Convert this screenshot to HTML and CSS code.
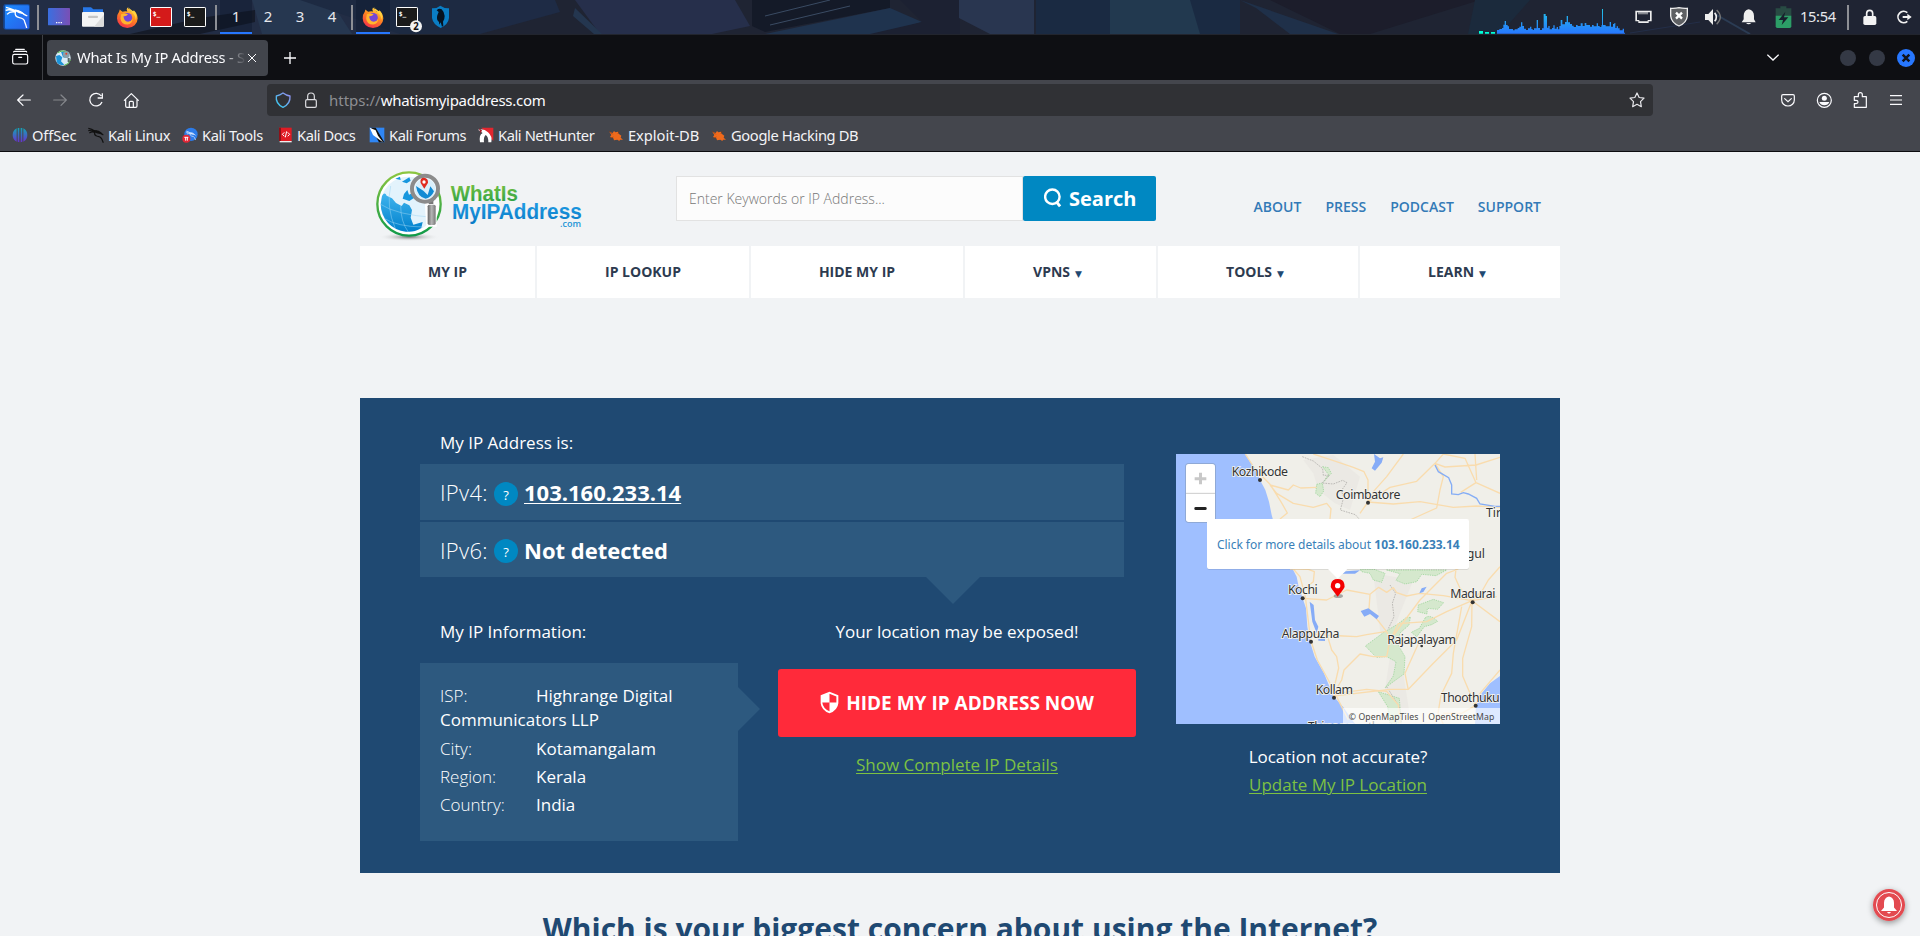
FILE: index.html
```html
<!DOCTYPE html>
<html lang="en">
<head>
<meta charset="utf-8">
<title>What Is My IP Address</title>
<link rel="stylesheet" href="styles.css">
</head>
<body>
<svg class="defs" width="0" height="0">
  <defs>
    <linearGradient id="kali" x1="0" y1="0" x2="1" y2="1"><stop offset="0" stop-color="#1a8cff"/><stop offset="1" stop-color="#2a5fe8"/></linearGradient>
    <linearGradient id="desk" x1="0" y1="0" x2="1" y2="0"><stop offset="0" stop-color="#3a6fe0"/><stop offset="1" stop-color="#7a4fb5"/></linearGradient>
    <linearGradient id="ffx" x1="0.8" y1="0" x2="0.3" y2="1"><stop offset="0" stop-color="#ffe14a"/><stop offset=".45" stop-color="#ff8a1f"/><stop offset="1" stop-color="#f5304a"/></linearGradient>
    <linearGradient id="shl" x1="0" y1="1" x2="1" y2="0"><stop offset="0" stop-color="#2fd0ee"/><stop offset="1" stop-color="#9a8cf0"/></linearGradient>
    <linearGradient id="cpu" x1="0" y1="0" x2="0" y2="1"><stop offset="0" stop-color="#22c3e6"/><stop offset="1" stop-color="#2777ff"/></linearGradient>
    <linearGradient id="off" x1="0" y1="0" x2="0" y2="1"><stop offset="0" stop-color="#12a5b5"/><stop offset="1" stop-color="#6a2fd0"/></linearGradient>
    <linearGradient id="ring" x1="0" y1="0" x2="0" y2="1"><stop offset="0" stop-color="#8cc640"/><stop offset="1" stop-color="#0f9a48"/></linearGradient>
    <linearGradient id="sea" x1="0" y1="0" x2="0" y2="1"><stop offset="0" stop-color="#3fb4ee"/><stop offset="1" stop-color="#0080cc"/></linearGradient>
    <linearGradient id="green" x1="0" y1="0" x2="0" y2="1"><stop offset="0" stop-color="#7cc242"/><stop offset="1" stop-color="#1f9d48"/></linearGradient>
    <linearGradient id="blue" x1="0" y1="0" x2="0" y2="1"><stop offset="0" stop-color="#22a0e8"/><stop offset="1" stop-color="#0a7bc6"/></linearGradient>
    <linearGradient id="steel" x1="0" y1="0" x2="1" y2="0"><stop offset="0" stop-color="#666"/><stop offset=".5" stop-color="#b5b5b5"/><stop offset="1" stop-color="#777"/></linearGradient>
    <radialGradient id="shade"><stop offset="0" stop-color="#777"/><stop offset="1" stop-color="#f1f3f5" stop-opacity="0"/></radialGradient>
    <symbol id="firefox" viewBox="0 0 64 64">
      <path fill="url(#ffx)" d="M32 4Q40 10 43 17Q50 17 51 12Q62 23 62 36A30 28 0 0 1 2 36Q1 26 8 17L10 10Q14 14 18 17Q25 14 32 16Q28 9 32 4Z"/>
      <circle cx="32" cy="34" r="14" fill="#7546d6"/>
      <path fill="#ffb52e" d="M14 24Q24 19 34 24Q29 31 21 30Q21 44 34 46Q44 45 47 37Q47 52 32 54Q14 53 12 36Z"/>
      <path fill="#ffd23f" d="M35 2Q36 12 45 18Q57 27 56 41Q62 30 54 17Q47 15 43 11Q37 8 35 2Z"/>
    </symbol>
    <symbol id="dragon" viewBox="0 0 48 48">
      <path fill="none" stroke="currentColor" stroke-width="3.6" d="M1 4Q12 6 20 12Q30 10 38 17Q42 22 46 24M1 11Q12 9 22 16M4 18Q12 13 20 16Q18 24 26 27Q38 29 41 35Q44 42 46 47"/>
      <path fill="currentColor" d="M16 9Q34 10 45 24L36 21Q28 20 22 17Z"/>
    </symbol>
    <symbol id="bug" viewBox="0 0 48 48">
      <path fill="#f06a1c" d="M4 14L14 18L18 12L22 16L30 14L32 20L40 26L38 32L45 38L36 38L34 42L28 38L18 40L16 34L6 30L10 24Z"/><path stroke="#8a3a10" stroke-width="2" d="M4 12L14 22M8 34L16 30M34 12L30 20"/>
    </symbol>
  </defs>
</svg>

<div class="panel">
  <svg class="wallpaper" viewBox="0 0 1920 34" preserveAspectRatio="none">
    <path fill="#222d45" d="M0 0H480V34H0Z"/><path fill="#151b29" d="M130 34L200 18L255 10V22L200 34Z"/><path fill="#263750" d="M252 0H330L352 34H262Z"/><path fill="#1d2a42" d="M300 0H480V34H400Z"/>
    <path fill="#1e2b45" d="M480 0H555L560 12L480 34Z"/><path fill="#262f4b" d="M575 0H735L750 26L712 34H600Z"/><path fill="#24364f" d="M575 8L602 34H594L573 16Z"/><path fill="#141a28" d="M752 0H890V8L765 32L752 26Z"/><path stroke="#3a4b63" d="M765 16L830 0M770 25L850 6"/>
    <path fill="#1f334e" d="M890 8L765 34H880L922 22Z"/><path fill="#1c2132" d="M900 0H960V34H870L922 22Z"/><path fill="#293650" d="M959 0H1034V34H990L959 18Z"/><path fill="#1a2a42" d="M1036 0H1240V34H1036Z"/><path fill="#22394f" d="M1110 0H1190L1200 34H1110Z"/><path fill="#1f3049" d="M1240 0L1338 34H1290L1256 8Z"/><path fill="#1c1d2b" d="M1270 0H1480L1370 34H1340Z"/>
    <path fill="#1b2a3c" d="M1475 0L1530 0L1500 34H1468Z"/><path stroke="#2b3c54" stroke-width="2" d="M1715 14L1750 34"/><path stroke="#232e48" d="M1630 33L1700 22"/>
  </svg>
  <div class="cell start"><svg viewBox="0 0 108 102" width="36" height="34"><rect x="10" y="12" width="80" height="77" rx="7" fill="#164a9b"/><rect x="15" y="16" width="72" height="70" rx="3" fill="url(#kali)"/><path fill="none" stroke="#fff" stroke-width="4" d="M18 22Q30 24 46 32Q60 31 72 43L82 48M17 31Q30 26 48 35M21 43Q30 33 46 36Q43 50 58 53Q73 56 74 65Q79 78 80 84"/><path fill="#fff" d="M44 28Q64 31 80 48L68 42Q56 40 50 36Z"/></svg></div>
  <div class="sep first"></div>
  <div class="cell"><svg viewBox="126 0 102 102"><rect x="144" y="24" width="66" height="52" rx="2" fill="url(#desk)"/><path fill="#fff" d="M168 66h4v4h-4zm7 0h4v4h-4zm7 0h4v4h-4z"/></svg></div>
  <div class="cell"><svg viewBox="228 0 102 102"><path fill="#2777e8" d="M249 22h24l7 6h29v22h-60z"/><rect x="246" y="36" width="66" height="44" rx="3" fill="#f4f4f4"/><path fill="#dcdcdc" d="M312 44V77L308 80H282Z"/><rect x="264" y="47" width="30" height="7" rx="3" fill="#c5c5c5"/></svg></div>
  <div class="cell"><svg viewBox="0 0 102 102"><use href="#firefox" x="19" y="18" width="66" height="66"/></svg></div>
  <div class="cell"><svg viewBox="432 0 102 102"><rect x="451.500" y="22.500" width="63" height="57" rx="2" fill="#d41a1a" stroke="#fff" stroke-width="3"/><text x="458" y="48" class="prompt">$_</text></svg></div>
  <div class="cell"><svg viewBox="534 0 102 102"><rect x="553.500" y="22.500" width="63" height="57" rx="2" fill="#1a1a1a" stroke="#fff" stroke-width="3"/><text x="560" y="48" class="prompt">$_</text></svg></div>
  <div class="sep"></div>
  <div class="ws on">1</div><div class="ws">2</div><div class="ws">3</div><div class="ws">4</div>
  <div class="sep"></div>
  <div class="cell on"><svg viewBox="0 0 102 102"><use href="#firefox" x="18" y="18" width="66" height="66"/></svg></div>
  <div class="cell"><svg viewBox="1170 0 102 102"><rect x="1189.500" y="22.500" width="63" height="57" rx="2" fill="#1a1a1a" stroke="#fff" stroke-width="3"/><text x="1196" y="48" class="prompt">$_</text><circle cx="1248" cy="79" r="18" fill="#f2f2f2"/><text x="1248" y="90" class="count">2</text></svg></div>
  <div class="cell"><svg viewBox="1272 0 102 102"><path fill="#0a7dc4" d="M1321 17Q1334 26 1347 25V54Q1345 73 1322 84Q1299 73 1296 54V25Q1310 26 1321 17Z"/><path fill="#06121f" d="M1310 31Q1317 24 1325 28Q1333 36 1334 48Q1334 58 1329 65L1330 77L1326 80L1322 67L1318 74L1317 66Q1308 60 1312 46L1316 36Z"/></svg></div>
  <div class="tray">
    <svg viewBox="114 0 444 102" width="148" height="34"><path fill="#00ffd5" d="M117 93h12v8h-12zM135 96h12v5h-12zM153 96h12v5h-12z"/><path fill="url(#cpu)" d="M171 101V90H178V87H186V84H190V74H194V63H198V75H203V79H207V87H219V91H224V88H233V84H238V80H243V67H247V78H252V86H258V90H264V85H270V80H274V87H278V90H282V85H290V60H294V84H300V90H306V85H311V42H317V48H321V83H325V78H329V88H336V84H340V76H344V86H350V81H354V88H358V78H362V60H367V73H375V66H380V48H384V67H390V72H396V77H401V81H408V75H413V78H422V70H428V78H434V69H439V75H450V80H456V75H461V79H470V70H474V78H479V81H484V76H486V27H489V75H497V79H509V66H513V80H519V72H523V69H526V84H530V79H534V85H539V91H548V86H552V98H555V101Z"/></svg>
    <svg class="ti" viewBox="558 0 105 102"><path fill="#eee" fill-rule="evenodd" d="M586 32H635V64H626V69H595V64H586ZM591 37V60H598V64H623V60H630V37Z"/><path stroke="#eee" stroke-width="3" d="M597 36V43M603 36V43M609 36V43M615 36V43M621 36V43"/></svg>
    <svg class="ti" viewBox="663 0 105 102"><path fill="#5e6063" stroke="#eee" stroke-width="4" d="M692 25Q706 26 717 23Q729 26 742 25V48Q740 68 717 78Q694 68 692 48Z"/><path stroke="#fff" stroke-width="7" d="M708 38L726 56M726 38L708 56"/></svg>
    <svg class="ti" viewBox="768 0 105 102"><path fill="#eee" d="M795 42h10l14-15v48L805 60H795z"/><path fill="none" stroke="#eee" stroke-width="5" d="M824 38Q834 51 824 64"/><path fill="none" stroke="#777" stroke-width="4" d="M830 30Q852 51 830 73"/></svg>
    <svg class="ti" viewBox="871 0 105 102"><path fill="#eee" d="M924 28Q940 31 940 48V58L945 67H903L909 58V48Q909 31 924 28ZM916 69h16q-8 8-16 0z"/></svg>
    <svg class="ti" viewBox="974 0 105 102"><path fill="#284b43" d="M1017 19h18v6h15v24h-47V25h14z"/><path fill="#2c9e67" d="M1003 47h47v32q0 5-5 5h-37q-5 0-5-5z"/><path fill="#17202d" d="M1032 35L1012 60h13l-4 15L1041 52h-13z"/></svg>
    <span class="clock">15:54</span><span class="bar"></span>
    <svg class="ti" viewBox="1234 0 105 102"><path fill="none" stroke="#f3f3f3" stroke-width="5" d="M1278 50V40Q1278 31 1287 31Q1296 31 1296 40V50"/><rect x="1268" y="48" width="39" height="27" rx="5" fill="#f3f3f3"/></svg>
    <svg class="ti" viewBox="1339 0 105 102"><path fill="none" stroke="#f3f3f3" stroke-width="5" d="M1400 38A17 17 0 1 0 1400 64"/><path fill="#f3f3f3" d="M1386 48h14v-7l13 10-13 10v-7h-14z"/></svg>
  </div>
</div>

<div class="tabs">
  <div class="view"><svg viewBox="33 145 54 54" width="18" height="18"><g fill="none" stroke="#fbfbfe" stroke-width="3.500" stroke-linecap="round"><rect x="38" y="164" width="45" height="29" rx="5"/><path d="M41 157Q41 155 44 155H77Q80 155 80 157M47 149H73M56 173H65"/></g></svg></div>
  <div class="tab"><svg viewBox="0 0 48 48" width="16" height="16"><circle cx="24" cy="24" r="23" fill="#d9ecf7"/><path fill="#1c93d8" d="M3 18L13 15L22 22L18 34L28 44Q12 48 5 36ZM18 5L30 3L28 14L36 24L24 22Z"/><path fill="none" stroke="#57b947" stroke-width="3" d="M8 8Q20-1 36 5M46 30Q42 43 28 46"/><circle cx="34" cy="14" r="10" fill="#8aa0ac"/><circle cx="34" cy="11" r="3" fill="#e5432a"/><path fill="#566" d="M38 24h6v12h-6z"/></svg><span class="tabtext">What Is My IP Address - See</span><svg class="close" viewBox="0 0 30 30" width="10" height="10"><path stroke="#fbfbfe" stroke-width="3" d="M3 3L27 27M27 3L3 27"/></svg></div>
  <svg class="plus" viewBox="0 0 36 36" width="12" height="12"><path stroke="#fbfbfe" stroke-width="4" d="M18 0V36M0 18H36"/></svg>
  <svg class="chev" viewBox="0 0 36 21" width="12" height="7"><path fill="none" stroke="#fbfbfe" stroke-width="4" d="M1 2L18 18L35 2"/></svg>
  <span class="win"></span><span class="win"></span><span class="win x"><svg viewBox="0 0 18 18" width="10" height="10"><path stroke="#10131a" stroke-width="4.500" d="M3 3L15 15M15 3L3 15"/></svg></span>
</div>

<div class="toolbar">
  <svg class="tb" viewBox="18 246 108 108"><path fill="none" stroke="#fbfbfe" stroke-width="3.600" stroke-linecap="round" stroke-linejoin="round" d="M91 300H53M69 285L53 300L69 316"/></svg>
  <svg class="tb" viewBox="126 246 108 108"><path fill="none" stroke="#85878c" stroke-width="3.600" stroke-linecap="round" stroke-linejoin="round" d="M161 300H199M183 285L199 300L183 316"/></svg>
  <svg class="tb" viewBox="234 246 108 108"><path fill="none" stroke="#fbfbfe" stroke-width="3.800" d="M304 288A19 19 0 1 0 306 306M307 280V294H293"/></svg>
  <svg class="tb" viewBox="342 246 108 108"><path fill="none" stroke="#fbfbfe" stroke-width="3.600" stroke-linejoin="round" stroke-linecap="round" d="M373 301L394 281L415 301M377 298V318Q377 322 381 322H407Q411 322 411 318V298M388 321V307Q388 304 391 304H397Q400 304 400 307V321"/></svg>
  <div class="urlbar">
    <svg viewBox="822 270 54 60" width="18" height="20"><path fill="none" stroke="url(#shl)" stroke-width="4" stroke-linejoin="round" d="M849 279Q858 286 870 288Q872 311 849 322Q826 311 829 288Q840 286 849 279Z"/></svg>
    <svg class="lock" viewBox="906 270 54 60" width="18" height="20"><g fill="none" stroke="#dcdce0" stroke-width="3.600"><rect x="917" y="299" width="32" height="23" rx="4"/><path d="M923 299V289Q923 279 933 279Q943 279 943 289V299"/></g></svg>
    <span class="url"><i>https://</i>whatismyipaddress.com</span>
    <svg class="star" viewBox="564 274 54 54" width="18" height="18"><path fill="none" stroke="#e8e8ec" stroke-width="3.600" stroke-linejoin="round" d="M591 280L597.500 293.500L612 295.500L601.500 306L604 321L591 314L578 321L580.500 306L570 295.500L584.500 293.500Z"/></svg>
  </div>
  <div class="tbr">
  <svg class="tb" viewBox="990 246 108 108"><path fill="none" stroke="#fbfbfe" stroke-width="3.600" stroke-linecap="round" d="M1029 284H1059Q1063 284 1063 288V300A19 18 0 0 1 1025 300V288Q1025 284 1029 284ZM1034 296L1044 305L1054 296"/></svg>
  <svg class="tb" viewBox="1098 246 108 108"><circle cx="1153" cy="301" r="21" fill="none" stroke="#fbfbfe" stroke-width="3.600"/><circle cx="1153" cy="295" r="7.500" fill="#fbfbfe"/><path fill="#fbfbfe" d="M1138 306H1168Q1164 316 1153 316Q1142 316 1138 306Z"/></svg>
  <svg class="tb" viewBox="1206 246 108 108"><path fill="none" stroke="#fbfbfe" stroke-width="3.600" stroke-linejoin="round" d="M1243 290H1255V284Q1255 278 1261 278Q1267 278 1267 284V290H1279V322H1243V311H1248Q1254 310 1254 306Q1254 301 1248 301H1243Z"/></svg>
  <svg class="tb" viewBox="1314 246 108 108"><path stroke="#fbfbfe" stroke-width="3.300" d="M1350 287H1386M1350 300H1386M1350 313H1386"/></svg>
  </div>
</div>
<div class="marks">
  <span class="m1"><svg viewBox="0 0 48 48"><path fill="url(#off)" d="M14 4V44Q2 38 2 24Q2 10 14 4ZM17 3H22V46L17 44ZM26 3H31V44L26 46ZM34 4Q46 10 46 24Q46 38 34 44Z"/></svg>OffSec</span>
  <span class="m2"><svg viewBox="0 0 48 48" color="#111"><use href="#dragon"/></svg>Kali Linux</span>
  <span class="m3"><svg viewBox="0 0 48 48"><circle cx="27" cy="22" r="20" fill="#2c7be8"/><g color="#d8e8ff"><use href="#dragon" x="12" y="10" width="30" height="30"/></g><circle cx="13" cy="35" r="12" fill="#e32636"/><path stroke="#fff" stroke-width="3" d="M7 31H19M11 31V41M16 31V41"/></svg>Kali Tools</span>
  <span class="m4"><svg viewBox="0 0 48 48"><rect x="6" y="2" width="38" height="40" fill="#e01b24"/><path fill="#8e1118" d="M6 2h6v40H6z"/><path fill="#eee" d="M8 42h36v4H8z"/><path fill="none" stroke="#fff" stroke-width="3" d="M22 16L16 22L22 28M32 16L38 22L32 28M29 13L25 31"/></svg>Kali Docs</span>
  <span class="m5"><svg viewBox="0 0 48 48"><path fill="#2f86f5" d="M2 2H46V46H2Z"/><path fill="#111" d="M6 2H20L46 46H30Z"/><path fill="#fff" d="M2 2L20 10L27 26L42 46L27 35L12 24Z"/></svg>Kali Forums</span>
  <span class="m6"><svg viewBox="0 0 48 48"><path fill="#e3262f" d="M10 2H46V42Z"/><path fill="#fff" d="M0 8Q18 4 30 16Q44 28 40 46H31Q31 28 23 24Q16 30 18 46H6Q2 24 14 18Z"/><path fill="#a01a24" d="M3 4L12 10L8 20Z"/></svg>Kali NetHunter</span>
  <span class="m7"><svg viewBox="0 0 48 48"><use href="#bug"/></svg>Exploit-DB</span>
  <span class="m8"><svg viewBox="0 0 48 48"><use href="#bug"/></svg>Google Hacking DB</span>
</div>

<div class="page">
  <header class="head">
    <svg class="logo" viewBox="45 51 630 225" width="210" height="75">
      <ellipse cx="147" cy="261" rx="92" ry="13" fill="url(#shade)"/>
      <circle cx="147" cy="162" r="95" fill="#fff" stroke="url(#ring)" stroke-width="7"/>
      <circle cx="145" cy="163" r="83" fill="#e3f3fc"/>
      <path fill="url(#sea)" d="M66 138Q74 124 80 137L96 145L108 159L125 168L132 158L148 166L156 180L152 203L160 224L188 216L184 234Q160 248 138 245A83 83 0 0 1 62 163Z"/>
      <path fill="#1797de" d="M126 95L148 82L152 92L140 100ZM106 86L120 80L122 90ZM132 132L142 120L147 134L156 130L162 144L148 153L128 146Z"/>
      <path fill="none" stroke="#9bd4f3" stroke-width="1.500" d="M62 163Q110 195 220 202M72 205Q112 230 188 231M92 108Q78 170 106 236M122 166Q122 215 145 246"/>
      <path fill="#fff" d="M194 151H230V230H199Z"/><rect x="203" y="164" width="24" height="61" rx="5" fill="url(#steel)"/><path fill="#777" d="M206 150h14v12h-14z"/>
      <circle cx="195" cy="116" r="39" fill="#eef8fd" stroke="#8b8b8b" stroke-width="12"/><circle cx="195" cy="117" r="31" fill="#d9effb"/><path fill="#118bd4" d="M168 108L190 122L203 135L211 109L222 124Q214 143 197 146Q173 142 168 108Z"/>
      <path fill="#e02b20" d="M193 116L182 99Q179 83 192 83Q205 84 204 98Z"/><circle cx="192" cy="96" r="5" fill="#fff"/>
      <text x="272" y="154" class="l1" textLength="202" lengthAdjust="spacingAndGlyphs">WhatIs</text>
      <text x="276" y="206" class="l2" textLength="389" lengthAdjust="spacingAndGlyphs">MyIPAddress</text>
      <text x="600" y="231" class="l3" textLength="63" lengthAdjust="spacingAndGlyphs">.com</text>
    </svg>
    <div class="search"><div class="field">Enter Keywords or IP Address...</div><div class="go"><svg viewBox="0 0 56 62" width="18" height="20"><circle cx="26" cy="27" r="22.500" fill="none" stroke="#fff" stroke-width="7.500"/><path stroke="#fff" stroke-width="9" d="M38 42L50 57"/></svg>Search</div></div>
    <div class="links"><a>ABOUT</a><a>PRESS</a><a>PODCAST</a><a>SUPPORT</a></div>
  </header>
  <nav class="nav"><a>MY IP</a><a>IP LOOKUP</a><a>HIDE MY IP</a><a>VPNS<b>▼</b></a><a>TOOLS<b>▼</b></a><a>LEARN<b>▼</b></a></nav>

  <section class="hero">
    <div class="main">
      <p class="cap">My IP Address is:</p>
      <div class="row r1"><span>IPv4:</span><em>?</em><strong class="u">103.160.233.14</strong></div>
      <div class="row r2"><span>IPv6:</span><em>?</em><strong>Not detected</strong><i class="down"></i></div>
      <div class="lower">
        <div class="info">
          <p class="cap2">My IP Information:</p>
          <div class="box">
            <p class="isp"><span>ISP:</span>Highrange Digital Communicators LLP</p>
            <p><span>City:</span>Kotamangalam</p>
            <p><span>Region:</span>Kerala</p>
            <p><span>Country:</span>India</p>
            <i class="right"></i>
          </div>
        </div>
        <div class="action">
          <p class="exposed">Your location may be exposed!</p>
          <div class="hide"><svg viewBox="244 392 58 68" width="19" height="23"><path fill="#fff" fill-rule="evenodd" d="M273 393L300 404V428Q298 449 273 459Q248 449 246 428V404ZM273 399V426H294V408ZM273 426H251Q253 444 273 453Z"/></svg>HIDE MY IP ADDRESS NOW</div>
          <a class="green">Show Complete IP Details</a>
        </div>
      </div>
    </div>
    <div class="side">
      <svg class="map" viewBox="48 42 972 810" width="324" height="270">
        <rect x="48" y="42" width="972" height="810" fill="#9fbfff"/>
        <path fill="#f0efe9" d="M255 42L270 65L290 95L300 120L316 150L327 185L335 225L345 260L398 387L410 410L416 440L428 475L438 505L442 560L450 605L464 650L492 700L520 768L550 802L585 852H945L948 797L965 760L990 730L1020 708V42Z"/>
        <g fill="#ebe9e4"><path d="M430 60L520 45L600 110L570 210L525 190L475 150L460 100Z"/><path d="M640 400L760 420L720 520L690 600L730 700L750 830L670 780L690 650L660 570Z"/></g>
        <g fill="#d5e8cd" stroke="#8ed08e" stroke-width="2" stroke-dasharray="4 3"><path d="M488 80L505 83L514 100L490 127L505 103Z"/><path d="M470 133L487 129L491 153L480 170L467 160Z"/><path d="M600 387H640L675 400L665 427L640 420L630 400L605 395Z"/><path d="M680 390H860L828 407L785 403L770 425L735 432L708 421L720 401Z"/><path d="M775 495L820 478L851 488L833 508L802 505L801 522L773 515Z"/><path d="M796 533Q811 522 833 544L815 554L793 560L770 590L754 577L778 565Z"/><path d="M751 532L747 555L720 579L712 611L735 650L732 702L700 725L675 744L700 708L708 665L680 650L649 652L616 618L670 578L714 552L738 533Z"/><path d="M655 755L680 763L718 775L724 850H690L683 800Z"/></g>
        <g fill="none" stroke="#bcbab6" stroke-width="3" stroke-dasharray="5 3"><path d="M427 50L460 63L488 86L490 106L508 106L486 129L520 132L548 121L561 128L544 152L551 172L541 210L586 224L600 240M690 435L707 460L697 490L702 530L684 568M680 740L702 775L718 800L724 850"/></g>
        <g fill="none" stroke="#f9dcae" stroke-width="4" stroke-linejoin="round">
          <path d="M256 42L285 87L330 133L364 187L382 219L360 237M400 387L420 410L436 470L452 600L472 660L505 720L540 790L565 840M330 135L385 150L400 135L422 144L470 142M330 135L350 160L400 190L460 202L500 190L513 206L510 237M390 387L420 387L445 388L463 395L460 425L440 440"/>
          <path d="M460 42L500 55L545 70L580 82L612 95L624 120V186L600 220M730 42L680 110L640 155L624 186L700 192L780 185L880 202L950 198L1020 202M624 186L690 142L770 124L825 70L850 42M825 70L850 110L840 150L830 204L750 240M1020 52L948 75L855 81L825 70M850 42L915 55L948 128L902 157M948 128L1020 160M945 42L950 120"/>
          <path d="M428 475L500 480L560 450L630 463L656 442L680 457L700 443L710 458L740 468L780 460L850 467L936 482L1010 470M630 463L627 507L680 575L690 600M690 600L780 480L860 400L895 387M936 482L900 445L885 412L888 387M1020 380L985 420L968 450L936 482M690 600L715 551L800 545L860 515L936 482M452 582L550 588L590 590L620 584L680 574M690 600L680 650L640 650L600 642L552 690L545 720L530 745L520 768L690 748L745 748L820 670L890 600L936 482M500 580L515 630L530 650L536 684L522 745M936 482L935 560L908 655L908 708L946 797M936 482L1020 545M905 500L880 640L875 700L843 765L834 820L850 852M530 760L620 748L680 754L715 795L720 852M745 750L735 700L780 600M1020 690L960 760L946 797L905 820L850 820"/>
        </g>
        <path fill="none" stroke="#85adf5" stroke-width="4" d="M825 75L835 95L866 113L875 135V162L895 164L910 158L925 162L950 175L960 192L1005 199H1020"/>
        <path fill="#86acf7" d="M642 42L660 55L670 52L665 68L645 92L635 85L645 65ZM548 401L557 394L600 391L585 401ZM602 513L625 505L657 528L650 538L630 522L613 530ZM778 460L785 445L800 440L790 456ZM449 485L461 495L465 540L475 560L470 580L457 545ZM475 596L495 595V603L475 602Z"/>
        <g fill="#333"><circle cx="300" cy="120" r="6"/><circle cx="624" cy="188" r="6"/><circle cx="428" cy="475" r="6"/><circle cx="453" cy="605" r="6"/><circle cx="522" cy="773" r="6"/><circle cx="938" cy="487" r="6"/><circle cx="947" cy="797" r="6"/><circle cx="785" cy="618" r="4"/></g>
        <g class="city"><text x="215" y="108" textLength="169">Kozhikode</text><text x="527" y="176" textLength="194">Coimbatore</text><text x="978" y="230">Tir</text><text x="920" y="353">gul</text><text x="384" y="463" textLength="89">Kochi</text><text x="871" y="474" textLength="135">Madurai</text><text x="365" y="594" textLength="173">Alappuzha</text><text x="682" y="612" textLength="206">Rajapalayam</text><text x="467" y="762" textLength="112">Kollam</text><text x="843" y="785" textLength="176">Thoothuku</text><text x="444" y="874" textLength="340">Thiruvananthapuram</text></g>
        <rect x="549" y="804" width="471" height="48" fill="#fff" fill-opacity=".65"/><text class="attr" x="566" y="840" textLength="437">© OpenMapTiles | OpenStreetMap</text>
        <rect x="75" y="69" width="93" height="180" rx="12" fill="#8fa9d6"/><rect x="78" y="72" width="87" height="174" rx="8" fill="#fff"/><path stroke="#ccc" stroke-width="3" d="M78 160H165"/><path stroke="#c8c8c8" stroke-width="9" d="M104 116H139M121.500 98V133"/><rect x="103" y="201" width="37" height="9" rx="4" fill="#222"/>
        <rect x="141" y="239" width="786" height="150" rx="6" fill="#000" opacity=".12"/><path fill="#fff" d="M147 237H921Q927 237 927 243V381Q927 387 921 387H562L533 416L504 387H147Q141 387 141 381V243Q141 237 147 237Z"/>
        <text class="pop" x="171" y="327" textLength="462">Click for more details about</text><text class="pop b" x="643" y="327" textLength="256">103.160.233.14</text>
        <ellipse cx="535" cy="468" rx="14" ry="6" fill="#777" opacity=".6"/><path fill="#f40000" d="M533 470L516 448Q510 440 513 432Q516 417 533 417Q550 417 553 432Q556 440 550 448Z"/><circle cx="533" cy="437" r="8" fill="#fff"/>
      </svg>
      <p class="acc">Location not accurate?</p><a class="green">Update My IP Location</a>
    </div>
  </section>
  <h2>Which is your biggest concern about using the Internet?</h2>
</div>
<div class="bell"><svg viewBox="0 0 32 32" width="32" height="32"><circle cx="16" cy="16" r="16" fill="#e34a50"/><circle cx="16" cy="16" r="12.500" fill="none" stroke="#fff" stroke-width="1"/><path fill="#fff" d="M16 7.500Q21 8.500 21 14V18.500L24 22H8L11 18.500V14Q11 8.500 16 7.500ZM14 23H18Q16 26 14 23Z"/></svg></div>
</body>
</html>
```
FILE: styles.css
```css
* { box-sizing: border-box; }
body { margin: 0; width: 1920px; height: 936px; overflow: hidden; background: #f1f3f5; font-family: "Open Sans", sans-serif; position: relative; }
p, h2 { margin: 0; }
svg { display: block; flex: none; }
.defs { position: absolute; }

.panel { height: 35px; display: flex; position: relative; background: #1f2433; border-bottom: 1px solid #22252e; font: 15px/34px "Noto Sans", sans-serif; color: #e6e8ec; }
.wallpaper { position: absolute; left: 0; top: 0; width: 1920px; height: 34px; }
.panel > div { position: relative; }
.cell { width: 34px; height: 34px; }
.start { width: 36px; }
.sep { width: 8px; height: 34px; padding: 5px 3px 4px; }
.sep::before { content: ""; display: block; width: 2px; height: 25px; background: #8d8f95; }
.sep.first { width: 6px; padding-left: 1px; }
.ws { width: 32px; height: 34px; text-align: center; line-height: 33px; }
.on { background: rgba(10, 20, 40, .35); box-shadow: inset 0 -2px #2777ff; }
.prompt { font: bold 19px "DejaVu Sans Mono", monospace; fill: #fff; }
.count { font: bold 29px "Noto Sans", sans-serif; fill: #111; text-anchor: middle; }
.tray { display: flex; margin-left: auto; margin-right: -2px; }
.ti { width: 35px; height: 34px; }
.clock { width: 36px; margin-left: -1px; white-space: nowrap; font-size: 14.7px; line-height: 33px; letter-spacing: -.35px; }
.bar { width: 2px; height: 25px; margin: 5px 3px 0 11px; background: #8d8f95; }

.tabs { height: 45px; background: #0e0f13; display: flex; align-items: center; font: 14.7px/20px "Noto Sans", sans-serif; color: #fbfbfe; }
.view { width: 43px; height: 45px; padding: 13px 0 0 11px; border-right: 1px solid #3e4045; }
.tab { width: 221px; height: 36px; margin: 0 16px 0 4px; padding: 0 11px 0 8px; border-radius: 4px; background: #42454c; display: flex; align-items: center; }
.tabtext { width: 169px; margin: -1px 0 0 6px; letter-spacing: -.26px; overflow: hidden; white-space: nowrap; -webkit-mask-image: linear-gradient(90deg, #000 145px, transparent 169px); mask-image: linear-gradient(90deg, #000 145px, transparent 169px); }
.close { margin-left: 2px; }
.chev { margin-left: auto; margin-right: 61px; }
.win { width: 16px; height: 16px; border-radius: 50%; background: #343945; margin-right: 13px; }
.win.x { width: 18px; height: 18px; background: #2777ff; margin: 0 5px 0 -1px; display: flex; align-items: center; justify-content: center; }

.toolbar { height: 40px; background: #44464d; padding-left: 6px; display: flex; align-items: center; }
.tb { width: 36px; height: 36px; }
.urlbar { width: 1386px; height: 32px; margin-left: 117px; border-radius: 4px; background: #303135; display: flex; align-items: center; padding: 0 7px; font: 15px/32px "Noto Sans", sans-serif; color: #fbfbfe; }
.lock { margin-left: 10px; }
.url { margin-left: 9px; letter-spacing: -.28px; }
.url i { font-style: normal; color: #8d8e92; letter-spacing: 0; }
.star { margin-left: auto; }
.tbr { display: flex; margin-left: 117px; }
.marks { height: 32px; background: #44464d; border-bottom: 1px solid #0c0c0f; padding: 0 0 2px 12px; display: flex; align-items: center; gap: 12px; font: 14.7px/20px "Noto Sans", sans-serif; color: #f3f3f6; letter-spacing: -.36px; }
.marks span { display: flex; align-items: center; gap: 4px; white-space: nowrap; }
.marks svg { width: 16px; height: 16px; }
.marks .m1 { width: 64px; letter-spacing: -.1px; }
.marks .m2 { width: 82px; letter-spacing: -.4px; }
.marks .m3 { width: 83px; }
.marks .m4 { width: 80px; letter-spacing: -.45px; }
.marks .m5 { width: 97px; }
.marks .m6 { width: 118px; letter-spacing: -.42px; }
.marks .m7 { width: 91px; letter-spacing: -.05px; }

.page { width: 1200px; margin: 0 auto; }
.head { height: 94px; display: flex; padding: 15px 19px 0 15px; }
.l1 { font: bold 64px "Liberation Sans", sans-serif; fill: url(#green); }
.l2 { font: bold 64px "Liberation Sans", sans-serif; fill: url(#blue); }
.l3 { font: 600 26px "Open Sans", sans-serif; fill: #1b93d6; }
.search { display: flex; height: 45px; margin: 9px 0 0 91px; }
.field { width: 347px; border: 1px solid #e2e2e2; background: #fcfcfc; padding-left: 12px; font: 300 14px/43px "Open Sans", sans-serif; color: #777; }
.go { width: 133px; border-radius: 2px; background: #0088c2; color: #fff; font: bold 20px/45px "Open Sans", sans-serif; display: flex; align-items: center; padding-left: 21px; gap: 7px; }
.go svg { margin-top: -2px; }
.links { margin-left: auto; display: flex; gap: 24px; font: 600 14px/20px "Open Sans", sans-serif; color: #337ab7; padding-top: 30px; }
.nav { height: 52px; display: grid; grid-template-columns: 175px 212px 212px 191px 200px 200px; gap: 2px; }
.nav a { background: #fff; text-align: center; font: bold 14px/52px "Open Sans", sans-serif; color: #2d3b50; }
.nav b { display: inline-block; font: 9px/10px "DejaVu Sans", sans-serif; color: #1f4972; margin: 0 6px 0 5px; padding-bottom: 1px; }

.hero { height: 475px; margin-top: 100px; background: #1f4972; display: flex; color: #fff; padding-left: 60px; font-size: 17px; }
.main { width: 716px; }
.cap { padding: 33px 0 0 20px; line-height: 24px; height: 66px; }
.row { width: 704px; background: #2d597f; display: flex; align-items: center; padding-left: 20px; font-size: 22px; position: relative; }
.row span { width: 48px; margin-right: 6px; font-weight: 300; white-space: nowrap; letter-spacing: .3px; line-height: 30px; }
.row em { width: 24px; height: 24px; border-radius: 50%; background: #0088c2; font: 13px/26px "Open Sans", sans-serif; text-align: center; margin: 3px 6px 0 0; }
.row strong { line-height: 30px; }
.r1 { height: 56px; }
.r2 { height: 55px; margin-top: 2px; }
.u { text-decoration: underline; text-decoration-thickness: 1px; text-underline-offset: 2px; }
.down { position: absolute; left: 506px; top: 55px; border: 27.500px solid transparent; border-top-color: #2d597f; border-bottom: 0; }
.lower { display: flex; }
.info { width: 318px; }
.cap2, .exposed { padding-top: 43px; line-height: 24px; }
.cap2 { padding-left: 20px; height: 86px; }
.box { height: 178px; background: #2d597f; padding: 21px 15px 0 20px; position: relative; line-height: 24px; }
.box p { margin-bottom: 4px; }
.box .isp { margin-bottom: 5px; }
.box span { display: inline-block; width: 96px; font-weight: 300; }
.right { position: absolute; left: 318px; top: 24px; border: 22.500px solid transparent; border-left-color: #2d597f; border-right: 0; }
.action { width: 358px; margin-left: 40px; text-align: center; }
.exposed { height: 92px; }
.hide { height: 68px; border-radius: 3px; background: #ff2a3a; font: bold 19px/66px "Open Sans", sans-serif; display: flex; align-items: center; justify-content: center; gap: 7px; margin-bottom: 16px; padding-bottom: 1px; }
.green { color: #7dc142; text-decoration: underline; text-decoration-thickness: 1px; text-underline-offset: 2px; line-height: 24px; }
.side { width: 324px; margin-left: 40px; padding-top: 56px; text-align: center; }
.acc { margin-top: 21px; line-height: 24px; padding-bottom: 4px; }
.city { font: 37px "Noto Sans", sans-serif; fill: #333; stroke: #f5f4ef; stroke-width: 5px; paint-order: stroke; }
.attr { font: 26px "Noto Sans", sans-serif; fill: #4a4a4a; }
.pop { font: 36px "Noto Sans", sans-serif; fill: #3a7fb8; }
.pop.b { font-weight: bold; }
h2 { margin-top: 35px; text-align: center; font: bold 30px/42px "Open Sans", sans-serif; color: #1f4972; white-space: nowrap; }
.bell { position: absolute; left: 1873px; top: 889px; border-radius: 50%; box-shadow: 0 2px 6px rgba(0, 0, 0, .4); }
```
